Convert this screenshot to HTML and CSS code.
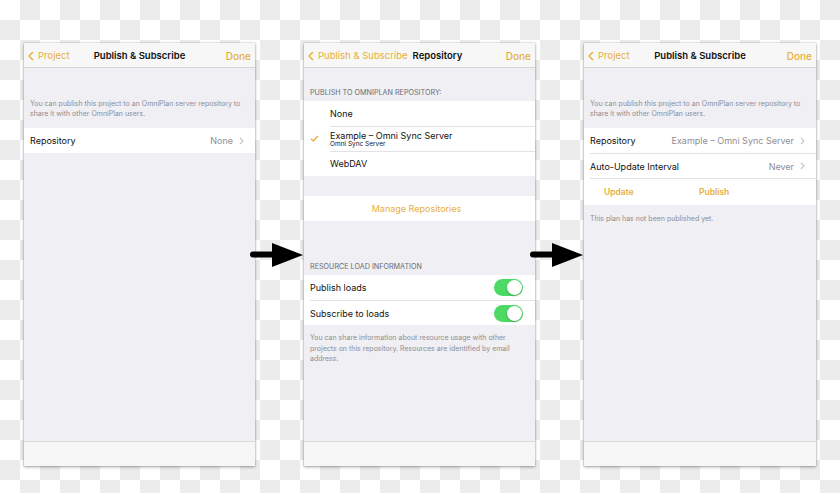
FILE: index.html
```html
<!DOCTYPE html>
<html lang="en">
<head>
    <meta charset="UTF-8">
    <title>OmniPlan - Publish & Subscribe</title>
    <link rel="stylesheet" href="styles.css">
</head>
<body>
    <div class="stage">

        <!-- screen 1: nothing published yet -->
        <div class="phone">
            <div class="nav">
                <span class="back"><svg class="back-chevron" viewBox="0 0 6 10"><polyline points="5,1 1,5 5,9"/></svg>Project</span>
                <span class="title">Publish &amp; Subscribe</span>
                <span class="done">Done</span>
            </div>
            <div class="content">
                <p class="note note-top">You can publish this project to an OmniPlan server repository to share it with other OmniPlan users.</p>
                <div class="group">
                    <div class="row">
                        <span class="label">Repository</span>
                        <span class="value">None</span>
                        <svg class="chevron" viewBox="0 0 5 8"><polyline points="1,1 4,4 1,7"/></svg>
                    </div>
                </div>
            </div>
            <div class="toolbar"></div>
        </div>

        <!-- screen 2: choose repository -->
        <div class="phone">
            <div class="nav nav-left">
                <span class="back"><svg class="back-chevron" viewBox="0 0 6 10"><polyline points="5,1 1,5 5,9"/></svg>Publish &amp; Subscribe</span>
                <span class="title">Repository</span>
                <span class="done">Done</span>
            </div>
            <div class="content">
                <div class="header header-first">Publish to OmniPlan repository:</div>
                <div class="group">
                    <div class="row row-check">
                        <span class="check"></span>
                        <span class="label">None</span>
                    </div>
                    <div class="row row-check">
                        <span class="check"><svg viewBox="0 0 9 7"><polyline points="1,3.8 3.3,6 8,1"/></svg></span>
                        <span class="label stack">Example – Omni Sync Server<small>Omni Sync Server</small></span>
                    </div>
                    <div class="row row-check">
                        <span class="check"></span>
                        <span class="label">WebDAV</span>
                    </div>
                </div>
                <div class="group group-manage">
                    <div class="row row-action">Manage Repositories</div>
                </div>
                <div class="header header-load">Resource load information</div>
                <div class="group">
                    <div class="row">
                        <span class="label">Publish loads</span>
                        <span class="toggle"></span>
                    </div>
                    <div class="row">
                        <span class="label">Subscribe to loads</span>
                        <span class="toggle"></span>
                    </div>
                </div>
                <p class="note note-bottom">You can share information about resource usage with other projects on this repository. Resources are identified by email address.</p>
            </div>
            <div class="toolbar"></div>
        </div>

        <!-- screen 3: repository chosen -->
        <div class="phone">
            <div class="nav">
                <span class="back"><svg class="back-chevron" viewBox="0 0 6 10"><polyline points="5,1 1,5 5,9"/></svg>Project</span>
                <span class="title">Publish &amp; Subscribe</span>
                <span class="done">Done</span>
            </div>
            <div class="content">
                <p class="note note-top">You can publish this project to an OmniPlan server repository to share it with other OmniPlan users.</p>
                <div class="group">
                    <div class="row">
                        <span class="label">Repository</span>
                        <span class="value">Example – Omni Sync Server</span>
                        <svg class="chevron" viewBox="0 0 5 8"><polyline points="1,1 4,4 1,7"/></svg>
                    </div>
                    <div class="row">
                        <span class="label">Auto-Update Interval</span>
                        <span class="value">Never</span>
                        <svg class="chevron" viewBox="0 0 5 8"><polyline points="1,1 4,4 1,7"/></svg>
                    </div>
                    <div class="row row-buttons">
                        <span class="link">Update</span>
                        <span class="link">Publish</span>
                    </div>
                </div>
                <p class="note note-status">This plan has not been published yet.</p>
            </div>
            <div class="toolbar"></div>
        </div>

        <svg class="arrow arrow-one" viewBox="0 0 53 24"><line x1="3" y1="11.5" x2="24" y2="11.5"/><polygon points="22,0 53,12 22,24"/></svg>
        <svg class="arrow arrow-two" viewBox="0 0 53 24"><line x1="3" y1="11.5" x2="24" y2="11.5"/><polygon points="22,0 53,12 22,24"/></svg>
    </div>
</body>
</html>
```

FILE: styles.css
```css
body {
    margin: 0;
    width: 840px;
    height: 493px;
    overflow: hidden;
    font-family: Inter, "Liberation Sans", sans-serif;
    background: repeating-conic-gradient(#ececec 0 25%, #fff 0 50%) 0 0 / 40px 40px;
}
.stage {
    position: relative;
    display: flex;
    gap: 49px;
    padding: 43px 0 0 24px;
}
.phone {
    width: 231px;
    height: 423px;
    display: flex;
    flex-direction: column;
    background: #efeff4;
    box-shadow: 0 1px 3px rgba(0,0,0,0.35), 0 0 1px rgba(0,0,0,0.3);
}
.phone:last-of-type {
    width: 232px;
}
.nav {
    height: 25px;
    flex: none;
    display: grid;
    grid-template-columns: 1fr auto 1fr;
    align-items: center;
    padding: 1px 4px 0 4px;
    background: #f7f7f7;
    border-bottom: 1px solid #d6d6da;
    box-sizing: border-box;
    font-size: 9.5px;
}
.nav-left {
    grid-template-columns: auto 1fr auto;
}
.nav-left .title {
    padding-left: 5px;
}
.back {
    display: flex;
    align-items: center;
    color: #e7b03d;
}
.back-chevron {
    width: 6px;
    height: 10px;
    margin-right: 4px;
    fill: none;
    stroke: #e7b03d;
    stroke-width: 1.5;
}
.title {
    font-weight: 600;
    color: #111;
}
.done {
    justify-self: end;
    color: #e7b03d;
    font-weight: 500;
    font-size: 10px;
}
.content {
    flex: 1;
}
.toolbar {
    height: 25px;
    flex: none;
    background: #f6f6f7;
    border-top: 1px solid #d9d9de;
    box-sizing: border-box;
}
.note {
    margin: 0;
    padding: 0 6px;
    font-size: 7px;
    line-height: 10px;
    color: #8e8e93;
}
.note-top {
    padding-top: 31px;
    margin-bottom: 9px;
}
.note-bottom {
    padding-top: 8px;
    line-height: 10.5px;
}
.note-status {
    padding-top: 9px;
}
.header {
    padding: 0 6px;
    font-size: 7.2px;
    line-height: 8px;
    text-transform: uppercase;
    color: #6d6d72;
    margin-bottom: 4px;
}
.header-first {
    padding-top: 21px;
}
.header-load {
    padding-top: 42px;
}
.group {
    background: #fff;
}
.group-manage {
    margin-top: 20px;
}
.row {
    height: 25px;
    display: flex;
    align-items: center;
    margin-left: 6px;
    padding-right: 11px;
    font-size: 9px;
    color: #111;
    border-top: 1px solid #e3e3e7;
    box-sizing: border-box;
}
.row:first-child {
    border-top: none;
}
.label {
    flex: 1;
}
.value {
    color: #8e8e93;
}
.chevron {
    width: 5px;
    height: 8px;
    margin-left: 6px;
    fill: none;
    stroke: #c4c4c9;
    stroke-width: 1.1;
}
.row-check {
    margin-left: 0;
    padding-left: 6px;
}
.row-check + .row-check {
    border-top: none;
    background: linear-gradient(#e3e3e7, #e3e3e7) 26px 0 / 100% 1px no-repeat;
}
.check {
    width: 20px;
    flex: none;
    display: flex;
}
.check svg {
    width: 9px;
    height: 7px;
    fill: none;
    stroke: #e7b03d;
    stroke-width: 1.3;
}
.stack {
    display: flex;
    flex-direction: column;
    line-height: 11px;
    padding-top: 1px;
}
.stack small {
    font-size: 6.5px;
    line-height: 7px;
}
.row-action {
    margin-left: 0;
    justify-content: center;
    padding-right: 6px;
    color: #e7b03d;
    font-size: 9px;
}
.row-buttons {
    height: 27px;
    font-weight: 600;
    font-size: 8.5px;
}
.link {
    color: #e7b03d;
    padding-left: 14px;
    width: 81px;
}
.toggle {
    position: relative;
    width: 29px;
    height: 17px;
    margin-right: 1px;
    border-radius: 9px;
    background: #4cd964;
}
.toggle::after {
    content: "";
    position: absolute;
    top: 1px;
    right: 1px;
    width: 15px;
    height: 15px;
    border-radius: 50%;
    background: #fff;
    box-shadow: 0 1px 2px rgba(0,0,0,0.25);
}
.arrow {
    position: absolute;
    top: 243px;
    width: 53px;
    height: 24px;
}
.arrow line {
    stroke: #000;
    stroke-width: 6;
    stroke-linecap: round;
}
.arrow polygon {
    fill: #000;
}
.arrow-one {
    left: 250px;
}
.arrow-two {
    left: 530px;
}
```
